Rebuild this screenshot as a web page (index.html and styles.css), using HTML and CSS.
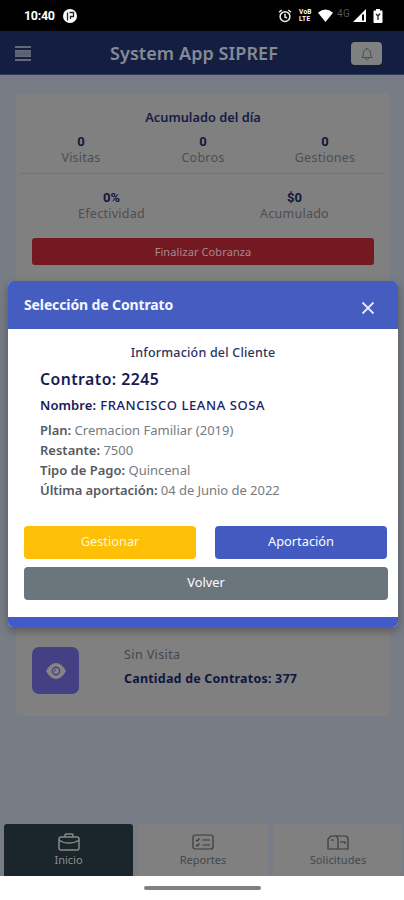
FILE: index.html
```html
<!DOCTYPE html>
<html lang="es">
<head>
<meta charset="utf-8">
<title>System App SIPREF</title>
<link rel="stylesheet" href="styles.css">
</head>
<body>
<div class="status">
  <span class="clock">10:40</span>
  <svg class="app-dot" width="14" height="14" viewBox="0 0 14 14"><circle cx="7" cy="7" r="7" fill="#fff"/><path d="M4.500 11.500V3.500M6.500 3.500H10.500V7.500H7.500V10" fill="none" stroke="#222" stroke-width="1.300"/></svg>
  <svg class="alarm" width="14" height="14" viewBox="0 0 14 14" fill="none" stroke="#eee" stroke-width="1.5"><circle cx="7" cy="7.6" r="4.9"/><path d="M1 3.3 3.7 1M13 3.3 10.3 1M7 4.8V8l2 1.2"/></svg>
  <span class="volte"><b>VoB</b><b>LTE</b></span>
  <svg class="wifi" width="15" height="13" viewBox="0 0 15 13"><path d="M0 3.7Q7.5-2.7 15 3.7L7.5 13Z" fill="#fff"/></svg>
  <span class="net">4G</span>
  <svg class="signal" width="13" height="13" viewBox="0 0 13 13"><path d="M0 13 13 0V13Z" fill="#fff"/><path d="M10 5.5V11.5" stroke="#000" stroke-width="2"/></svg>
  <svg class="battery" width="10" height="14" viewBox="0 0 10 14"><path d="M3 0H7V1.5H8.5Q9.5 1.5 9.5 2.5V13Q9.5 14 8.5 14H1.5Q.5 14 .5 13V2.5Q.5 1.5 1.5 1.5H3Z" fill="#fff"/><path d="M3 5 5 7V11M7 4.5 5 7" fill="none" stroke="#222" stroke-width="1.3"/></svg>
</div>
<header class="topbar">
  <svg class="menu" width="16" height="15" viewBox="0 0 16 15"><path d="M0 1H16M0 5H16M0 10H16M0 14H16" stroke="#7e838d" stroke-width="1.4"/><path d="M0 7.5H16" stroke="#5b6170" stroke-width="4"/></svg>
  <h1>System App SIPREF</h1>
  <button class="bell"><svg width="14" height="14" viewBox="0 0 14 14" fill="none" stroke="#4c4f51" stroke-width="1"><path d="M2 10.5C4 9 3 5.5 4.2 3.5 5.5 1.6 8.5 1.6 9.8 3.5 11 5.5 10 9 12 10.5ZM5.5 11C5.5 13.3 8.5 13.3 8.5 11M7 2V.8"/></svg></button>
</header>
<main class="page">
  <section class="card totals">
    <h2>Acumulado del día</h2>
    <div class="stats three">
      <div><b>0</b><span>Visitas</span></div>
      <div><b>0</b><span>Cobros</span></div>
      <div><b>0</b><span>Gestiones</span></div>
    </div>
    <div class="stats two">
      <div><b>0%</b><span>Efectividad</span></div>
      <div><b>$0</b><span>Acumulado</span></div>
    </div>
    <button class="finish">Finalizar Cobranza</button>
  </section>
  <section class="card visit">
    <div class="eye"><svg width="20" height="16" viewBox="0 0 20 16"><path d="M0 8Q4.5 0 10 0T20 8Q15.500 16 10 16T0 8Z" fill="#858585"/><circle cx="10" cy="8" r="3.7" fill="none" stroke="#454083" stroke-width="1.4"/><path d="M8 8Q9.500 8.200 9.500 6.300" fill="none" stroke="#454083"/></svg></div>
    <div class="visit-text"><span>Sin Visita</span><b>Cantidad de Contratos: 377</b></div>
  </section>
</main>
<nav class="tabs">
  <div class="tab active"><svg width="22" height="18" viewBox="0 0 22 18" fill="none" stroke="#858a8b" stroke-width="1.5"><rect x="1" y="4" width="20" height="13" rx="2"/><path d="M7 4V2Q7 1 8 1H14Q15 1 15 2V4M1 7Q5 10 11 10T21 7"/></svg><span>Inicio</span></div>
  <div class="tab"><svg width="22" height="18" viewBox="0 0 22 18" fill="none" stroke="#36393b" stroke-width="1.2"><rect x="1" y="2" width="20" height="14" rx="2"/><path d="M4 7 5.300 8 7.500 5.500M4 12 5.300 13 7.500 10.500M10.500 7H18M10.500 12H18"/></svg><span>Reportes</span></div>
  <div class="tab solic"><svg width="22" height="18" viewBox="0 0 22 18" fill="none" stroke="#36393b" stroke-width="1.2"><path d="M4 3H18Q21 3 21 6V16H1V6ZM8 3Q11 3.500 11 7V16M4 7H7M13 9H18V11"/></svg><span>Solicitudes</span></div>
</nav>
<footer class="gesture"><i></i></footer>

<div class="modal">
  <div class="modal-head"><h3>Selección de Contrato</h3><svg width="14" height="14" viewBox="0 0 14 14"><path d="M1.500 1.500 12.500 12.500M12.500 1.500 1.500 12.500" stroke="#e6eaf8" stroke-width="1.8"/></svg></div>
  <div class="modal-body">
    <h4>Información del Cliente</h4>
    <div class="details">
      <p class="contract"><b>Contrato:</b> 2245</p>
      <p class="name"><b>Nombre:</b> FRANCISCO LEANA SOSA</p>
      <p><b>Plan:</b> Cremacion Familiar (2019)</p>
      <p><b>Restante:</b> 7500</p>
      <p><b>Tipo de Pago:</b> Quincenal</p>
      <p class="last"><b>Última aportación:</b> 04 de Junio de 2022</p>
    </div>
    <div class="actions">
      <button class="manage">Gestionar</button>
      <button class="pay">Aportación</button>
      <button class="back">Volver</button>
    </div>
  </div>
  <div class="modal-foot"></div>
</div>
</body>
</html>
```
FILE: styles.css
```css
* { box-sizing: border-box; }
body { margin: 0; width: 404px; height: 900px; position: relative; overflow: hidden; display: flex; flex-direction: column; background: #fff; font-family: "Noto Sans", "Open Sans", sans-serif; font-size: 13px; }
h1, h2, h3, h4, p { margin: 0; }
button { border: 0; padding: 0; font: inherit; display: flex; align-items: center; justify-content: center; }
svg { display: block; flex: none; }

.status { height: 31px; background: #000; color: #fff; display: flex; align-items: center; padding-left: 24px; }
.clock { width: 39px; font: bold 12.500px Roboto, sans-serif; letter-spacing: -.3px; }
.alarm { margin-left: 201px; }
.volte { margin-left: 7px; width: 14px; display: flex; flex-direction: column; font: 6.500px/7px Roboto, sans-serif; letter-spacing: .3px; }
.wifi { margin-left: 5px; }
.net { margin-left: 4px; width: 15px; color: #555; font: 10px Roboto, sans-serif; letter-spacing: .5px; padding-bottom: 5px; }
.signal { margin-left: 1px; }
.battery { margin-left: 7px; }

.topbar { height: 44px; background: #141e40; border-bottom: 1px solid #29395a; display: flex; align-items: center; padding: 2px 22px 0 15px; }
.topbar h1 { flex: 1; margin: -2px 0 0 6px; text-align: center; color: #858a98; font-size: 18px; font-weight: 600; letter-spacing: .08px; line-height: 24px; white-space: nowrap; }
.bell { width: 31px; height: 23px; border-radius: 4px; background: #7e8180; }

.page { flex: 1; background: #787c84; padding: 18px 14px 0 16px; display: flex; flex-direction: column; }
.card { background: #808080; border-radius: 5px; }
.totals { height: 207px; padding: 14px 16px 0; }
.totals h2 { text-align: center; font-size: 12.800px; line-height: 20px; font-weight: 600; color: #151b46; }
.stats { display: grid; text-align: center; }
.stats div { display: flex; flex-direction: column; line-height: 16px; }
.stats b { font: 700 13px/17px Roboto, sans-serif; color: #10163f; }
.stats span { color: #4a4f55; font-size: 12.500px; letter-spacing: .25px; }
.three { grid-template-columns: repeat(3, 122px); margin: 6px -12px 0; height: 41px; border-bottom: 1px solid #737476; justify-content: center; }
.two { grid-template-columns: repeat(2, 183px); margin: 15px -12px 0; justify-content: center; }
.finish { width: 342px; height: 27px; margin-top: 16px; border-radius: 3px; background: #741922; color: #a58a8c; font-size: 11px; letter-spacing: .1px; }
.visit { margin-top: 312px; height: 104px; padding: 35px 16px 0; display: flex; gap: 45px; }
.eye { width: 47px; height: 47px; border-radius: 7px; background: #454083; display: flex; align-items: center; justify-content: center; }
.visit-text { display: flex; flex-direction: column; gap: 4px; line-height: 20px; margin-top: -2px; color: #44484d; font-size: 12.500px; letter-spacing: .4px; }
.visit-text b { color: #10163f; letter-spacing: .2px; }

.tabs { height: 52px; background: #787c84; display: grid; grid-template-columns: 129px 130px 128px; gap: 5px; padding: 0 4px; }
.tab { background: #808080; border-radius: 3px 3px 0 0; display: flex; flex-direction: column; align-items: center; padding-top: 9px; color: #44484b; font-size: 11px; line-height: 16px; gap: 1px; }
.tab.solic { padding-left: 2px; letter-spacing: .1px; }
.tab.active { background: #1a252c; color: #8b9092; }
.gesture { height: 24px; background: #fff; padding-top: 10px; }
.gesture i { display: block; width: 117px; height: 4px; margin-left: 144px; border-radius: 2px; background: #808080; }

.modal { position: absolute; left: 8px; top: 281px; width: 390px; height: 346px; border-radius: 5px; overflow: hidden; background: #fff; display: flex; flex-direction: column; box-shadow: 0 4px 10px rgba(0, 0, 0, .3); }
.modal-head { height: 48px; background: #455dc0; color: #f4f6ff; display: flex; justify-content: space-between; align-items: center; padding: 0 23px 0 16px; }
.modal-head svg { margin-top: 5px; }
.modal-head h3 { font-size: 14px; font-weight: 700; letter-spacing: -.12px; line-height: 20px; }
.modal-body { flex: 1; padding: 14px 10px 0 16px; }
.modal-body h4 { margin-right: 6px; text-align: center; font-size: 12.500px; line-height: 20px; font-weight: 500; letter-spacing: .2px; color: #2c325f; }
.details { padding-left: 16px; color: #777b82; font-size: 13px; line-height: 20px; white-space: nowrap; }
.details b { font-weight: 600; color: #555a62; }
.details .contract { margin-top: 6px; color: #171b55; font-size: 15.800px; font-weight: 600; letter-spacing: .45px; }
.details .contract b, .details .name b { color: #171b55; font-weight: 600; }
.details .name { margin: 6px 0 5px; color: #1c2165; font-size: 13px; font-weight: 500; letter-spacing: .6px; }
.details .name b { letter-spacing: .1px; }
.details .last { letter-spacing: -.04px; }
.actions { display: grid; grid-template-columns: 172px 172px; column-gap: 19px; row-gap: 8px; margin-top: 26px; color: #fff; }
.actions button { height: 33px; border-radius: 4px; color: #fafcff; font-size: 12.800px; padding-bottom: 3px; }
.actions .manage { background: #fdc006; color: #fff6d8; }
.pay { background: #435bc0; }
.back { grid-column: 1 / 3; width: 364px; background: #6b757c; }
.modal-foot { height: 10px; background: #435bc8; }
```
